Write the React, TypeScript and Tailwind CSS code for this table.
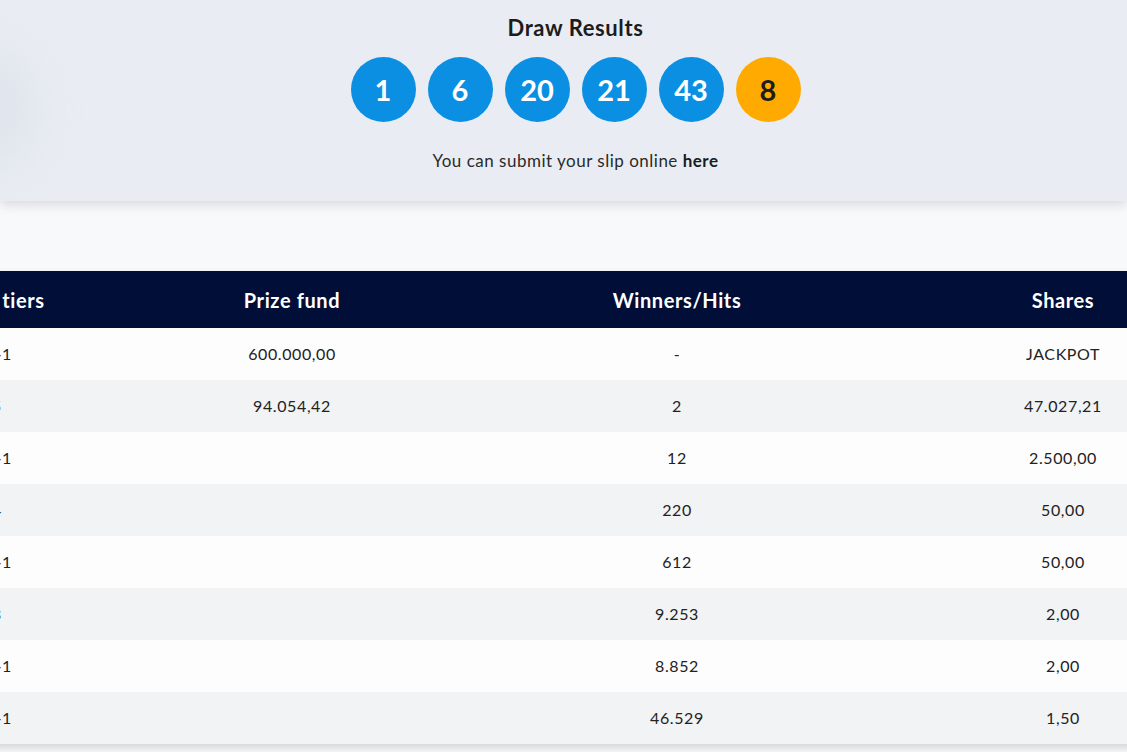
import React from "react";

const balls = [
  { n: 1, bonus: false },
  { n: 6, bonus: false },
  { n: 20, bonus: false },
  { n: 21, bonus: false },
  { n: 43, bonus: false },
  { n: 8, bonus: true },
];

const rows = [
  { tier: "5+1", fund: "600.000,00", hits: "-", share: "JACKPOT" },
  { tier: "5", fund: "94.054,42", hits: "2", share: "47.027,21" },
  { tier: "4+1", fund: "", hits: "12", share: "2.500,00" },
  { tier: "4", fund: "", hits: "220", share: "50,00" },
  { tier: "3+1", fund: "", hits: "612", share: "50,00" },
  { tier: "3", fund: "", hits: "9.253", share: "2,00" },
  { tier: "2+1", fund: "", hits: "8.852", share: "2,00" },
  { tier: "1+1", fund: "", hits: "46.529", share: "1,50" },
];

const font = { fontFamily: "Lato, 'Liberation Sans', sans-serif" };

const App = () => {
  return (
    <div className="w-[1127px] h-[752px] overflow-hidden bg-[#f8f9fa] text-[#222]" style={font}>
      {/* draw results panel */}
      <div className="relative h-[201px] bg-[#e9edf3] shadow-[0_4px_10px_rgba(0,0,0,0.12)] z-10">
        <div className="absolute -left-[70px] top-[45px] h-[130px] w-[110px] rounded-full bg-[#dbe0e8] blur-[22px] opacity-60"></div>
        <div className="relative flex flex-col items-center pl-6 pt-[14px]">
          <h2 className="text-[22px] font-bold leading-[28px] tracking-[0.6px] text-[#1c1c1c]">Draw Results</h2>
          <div className="mt-[15px] flex gap-3">
            {balls.map((b) => (
              <div
                key={b.n}
                className={
                  b.bonus
                    ? "h-[65px] w-[65px] rounded-full bg-[#ffaa00] flex items-center justify-center text-[29px] font-bold text-[#1c1c1c]"
                    : "h-[65px] w-[65px] rounded-full bg-[#0b8fe3] flex items-center justify-center text-[29px] font-bold text-white"
                }
              >
                {b.n}
              </div>
            ))}
          </div>
          <p className="mt-[29px] text-[17px] leading-5 text-[#2a2a2a] tracking-[0.5px]">
            You can submit your slip online <span className="font-bold text-[#1c1c1c]">here</span>
          </p>
        </div>
      </div>

      {/* winners table */}
      <div className="mt-[70px] -ml-[150px] w-[1362px] shadow-[0_4px_8px_rgba(0,0,0,0.15)]">
        <div className="grid grid-cols-[294px_296px_474px_298px] h-[57px] bg-[#010e37] text-white text-[20px] tracking-[0.6px] font-bold items-center text-center">
          <div>Prize tiers</div>
          <div>Prize fund</div>
          <div>Winners/Hits</div>
          <div>Shares</div>
        </div>
        {rows.map((r, i) => (
          <div
            key={r.tier}
            className={
              i % 2 === 0
                ? "grid grid-cols-[294px_296px_474px_298px] h-[52px] bg-[#fdfdfd] text-[16px] tracking-[0.6px] items-center text-center"
                : "grid grid-cols-[294px_296px_474px_298px] h-[52px] bg-[#f2f3f5] text-[16px] tracking-[0.6px] items-center text-center"
            }
          >
            <div className={r.tier.includes("+") ? "text-[#222]" : "text-[#28486e]"}>{r.tier}</div>
            <div>{r.fund}</div>
            <div>{r.hits}</div>
            <div>{r.share}</div>
          </div>
        ))}
      </div>
    </div>
  );
};

export default App;
